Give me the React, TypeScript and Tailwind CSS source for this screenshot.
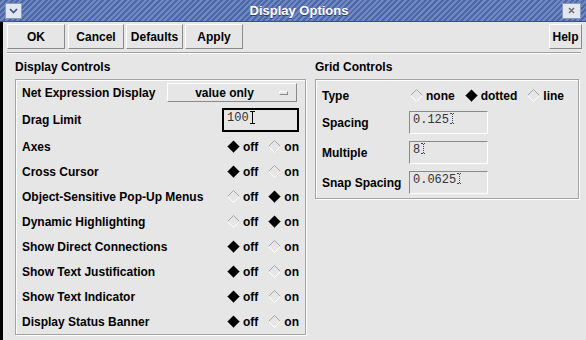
import React from "react";

function Diamond({ on }: { on: boolean }) {
  return (
    <svg width="13" height="13" viewBox="0 0 13 13" className="shrink-0">
      {on ? (
        <>
          <polygon points="6.5,0.5 12.5,6.5 6.5,12.5 0.5,6.5" fill="#000000" />
          <polyline points="0.5,6.5 6.5,12.5 12.5,6.5" fill="none" stroke="#555555" />
        </>
      ) : (
        <>
          <polyline points="0.5,6.5 6.5,0.5 12.5,6.5" fill="none" stroke="#a6a6a6" />
          <polyline points="0.5,6.5 6.5,12.5 12.5,6.5" fill="none" stroke="#ffffff" />
        </>
      )}
    </svg>
  );
}

function Radio({ on, label }: { on: boolean; label: string }) {
  return (
    <div className="flex items-center">
      <Diamond on={on} />
      <span className="ml-[3px]">{label}</span>
    </div>
  );
}

function Btn({ w, children }: { w: string; children: React.ReactNode }) {
  return (
    <div
      className={`${w} h-[25px] flex items-center justify-center border border-t-white border-l-white border-b-[#8a8a8a] border-r-[#8a8a8a] text-[12px] font-bold`}
    >
      {children}
    </div>
  );
}

function IBeam({ dotted }: { dotted?: boolean }) {
  if (dotted) {
    return (
      <span className="ml-[1px] flex flex-col items-center">
        <span className="block w-[4px] h-0 border-t border-dotted border-[#444]" />
        <span className="block w-0 h-[9px] border-l border-dotted border-[#444]" />
        <span className="block w-[4px] h-0 border-t border-dotted border-[#444]" />
      </span>
    );
  }
  return (
    <span className="ml-[1px] flex flex-col items-center">
      <span className="block w-[5px] h-[1px] bg-black" />
      <span className="block w-[1px] h-[11px] bg-black" />
      <span className="block w-[5px] h-[1px] bg-black" />
    </span>
  );
}

function SunkenInput({ value }: { value: string }) {
  return (
    <div className="w-[79px] h-[23px] flex items-start pt-[1px] pl-[3px] border border-t-[#8a8a8a] border-l-[#8a8a8a] border-b-white border-r-white font-['Liberation_Mono',monospace] text-[12px] font-normal text-[#333] leading-[14px]">
      <span>{value}</span>
      <IBeam dotted />
    </div>
  );
}

const leftRows: { label: string; on: boolean }[] = [
  { label: "Axes", on: false },
  { label: "Cross Cursor", on: false },
  { label: "Object-Sensitive Pop-Up Menus", on: true },
  { label: "Dynamic Highlighting", on: true },
  { label: "Show Direct Connections", on: false },
  { label: "Show Text Justification", on: false },
  { label: "Show Text Indicator", on: false },
  { label: "Display Status Banner", on: false },
];

export default function App() {
  return (
    <div className="w-[586px] h-[340px] overflow-hidden bg-[#e6e6e6] font-['Liberation_Sans',Arial,sans-serif] text-black text-[12px] font-bold">
      {/* Title bar */}
      <div className="h-[22px] flex items-center bg-[repeating-linear-gradient(135deg,#4d68a8_0px,#4d68a8_2px,#7189c2_2px,#7189c2_4px)] border-b border-[#3b4f82]">
        <div className="ml-[5px] w-[17px] h-[16px] flex items-center justify-center bg-[#e2e6ef] border border-[#8d9bbb]">
          <svg width="9" height="6" viewBox="0 0 9 6">
            <polyline points="1,1 4.5,4.5 8,1" fill="none" stroke="#3c5283" strokeWidth="1.6" />
          </svg>
        </div>
        <div className="flex-1 text-center pl-[14px] text-white text-[13px] font-bold [text-shadow:0_1px_0_#2c3e6c]">
          Display Options
        </div>
        <div className="mr-[5px] w-[19px] h-[16px] flex items-center justify-center bg-[#e2e6ef] border border-[#8d9bbb]">
          <svg width="7" height="7" viewBox="0 0 7 7">
            <path d="M1 1 L6 6 M6 1 L1 6" stroke="#6e6e6e" strokeWidth="1.6" />
          </svg>
        </div>
      </div>

      {/* Body */}
      <div className="h-[318px] border-l-[3px] border-black flex flex-col">
        {/* Button row */}
        <div className="flex pt-[2px] pl-[4px] pr-[4px]">
          <Btn w="w-[58px]">OK</Btn>
          <div className="ml-[3px]">
            <Btn w="w-[56px]">Cancel</Btn>
          </div>
          <div className="ml-[2px]">
            <Btn w="w-[57px]">Defaults</Btn>
          </div>
          <div className="ml-[2px]">
            <Btn w="w-[58px]">Apply</Btn>
          </div>
          <div className="ml-auto">
            <Btn w="w-[33px]">Help</Btn>
          </div>
        </div>
        <div className="mt-[3px] ml-[4px] mr-[5px] h-[2px] border-t border-[#a0a0a0] border-b border-b-white" />

        {/* Columns */}
        <div className="flex pl-[12px]">
          {/* Display Controls */}
          <div className="w-[291px] flex flex-col">
            <div className="h-[25px] flex items-center">Display Controls</div>
            <div className="h-[256px] border border-[#a3a3a3] shadow-[inset_1px_1px_0_#ffffff,1px_1px_0_#ffffff] pl-[6px] pr-[6px] pt-[3px] flex flex-col">
              <div className="h-[19px] flex items-center">
                <span>Net Expression Display</span>
                <div className="ml-auto mr-[2px] w-[130px] h-[19px] flex items-center border border-t-white border-l-white border-b-[#8a8a8a] border-r-[#8a8a8a]">
                  <span className="flex-1 text-center pl-[2px]">value only</span>
                  <span className="mr-[8px] w-[9px] h-[4px] border border-t-white border-l-white border-b-[#8a8a8a] border-r-[#8a8a8a]" />
                </div>
              </div>
              <div className="mt-[6px] h-[24px] flex items-center">
                <span>Drag Limit</span>
                <div className="ml-auto w-[77px] h-[24px] border-2 border-black flex items-start pt-[1px] pl-[3px] font-['Liberation_Mono',monospace] text-[12px] font-normal text-[#333] leading-[14px]">
                  <span>100</span>
                  <IBeam />
                </div>
              </div>
              <div className="mt-[2px] flex flex-col">
                {leftRows.map((r) => (
                  <div key={r.label} className="h-[25px] flex items-center">
                    <span className="flex-1">{r.label}</span>
                    <div className="flex items-center gap-[10px]">
                      <Radio on={!r.on} label="off" />
                      <Radio on={r.on} label="on" />
                    </div>
                  </div>
                ))}
              </div>
            </div>
          </div>

          {/* Grid Controls */}
          <div className="ml-[9px] w-[264px] flex flex-col">
            <div className="h-[25px] flex items-center">Grid Controls</div>
            <div className="border border-[#a3a3a3] shadow-[inset_1px_1px_0_#ffffff,1px_1px_0_#ffffff] pl-[6px] pr-[6px] pt-[1px] pb-[4px] flex flex-col">
              <div className="h-[29px] flex items-center">
                <span className="w-[88px]">Type</span>
                <div className="flex items-center gap-[10px]">
                  <Radio on={false} label="none" />
                  <Radio on={true} label="dotted" />
                  <Radio on={false} label="line" />
                </div>
              </div>
              <div className="mt-[1px] flex flex-col gap-[7px]">
                {[
                  ["Spacing", "0.125"],
                  ["Multiple", "8"],
                  ["Snap Spacing", "0.0625"],
                ].map(([l, v]) => (
                  <div key={l} className="h-[23px] flex items-center">
                    <span className="w-[87px]">{l}</span>
                    <SunkenInput value={v} />
                  </div>
                ))}
              </div>
            </div>
          </div>
        </div>
      </div>
    </div>
  );
}
